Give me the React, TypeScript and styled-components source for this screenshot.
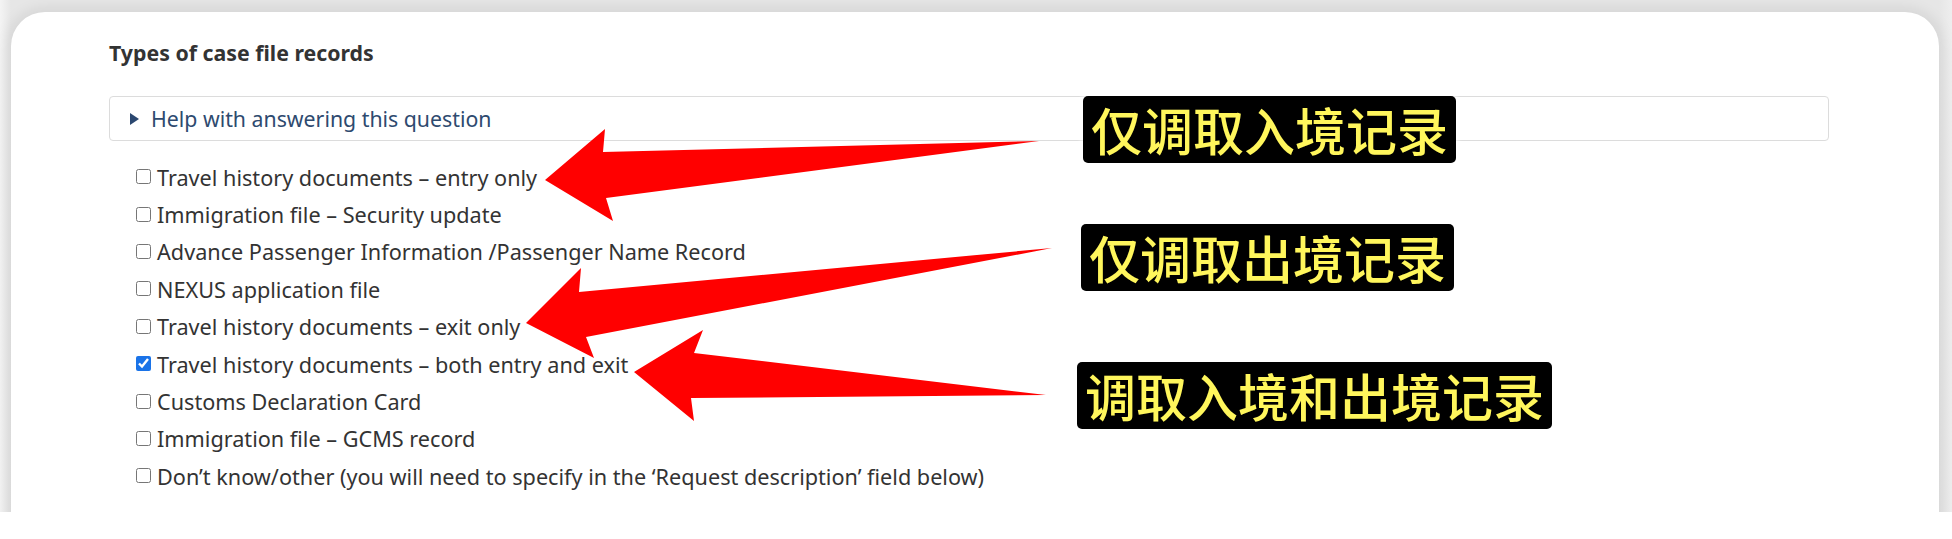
import styled, { createGlobalStyle } from 'styled-components';

const GlobalStyle = createGlobalStyle`
    html, body {
        margin: 0;
        padding: 0;
        background: #ffffff;
    }
    body {
        font-family: "Noto Sans", "Noto Sans CJK SC", sans-serif;
        color: #333333;
    }
`;

const options = [
    { label: 'Travel history documents – entry only', checked: false },
    { label: 'Immigration file – Security update', checked: false },
    { label: 'Advance Passenger Information /Passenger Name Record', checked: false },
    { label: 'NEXUS application file', checked: false },
    { label: 'Travel history documents – exit only', checked: false },
    { label: 'Travel history documents – both entry and exit', checked: true },
    { label: 'Customs Declaration Card', checked: false },
    { label: 'Immigration file – GCMS record', checked: false },
    { label: 'Don’t know/other (you will need to specify in the ‘Request description’ field below)', checked: false },
];

// callouts drawn on top of the screenshot
const notes = [
    { text: '仅调取入境记录', left: 1083, top: 96 },
    { text: '仅调取出境记录', left: 1081, top: 224 },
    { text: '调取入境和出境记录', left: 1077, top: 362 },
];

const arrows = [
    '545,180 605,129 603,152 1039,141 606,198 613,221',
    '526,323 581,268 579,292 1052,248 586,337 594,358',
    '634,372 703,330 694,353 1046,395 691,398 694,421',
];

export default function App(): JSX.Element {
    return (
        <>
            <GlobalStyle />
            <Page>
                <Card>
                    <Heading>Types of case file records</Heading>

                    <Help>
                        <Marker />
                        <HelpText>Help with answering this question</HelpText>
                    </Help>

                    <OptionList>
                        {options.map((o) => (
                            <OptionRow key={o.label}>
                                <Box type="checkbox" defaultChecked={o.checked} />
                                <OptionLabel>{o.label}</OptionLabel>
                            </OptionRow>
                        ))}
                    </OptionList>
                </Card>

                <Overlay width="1952" height="539" viewBox="0 0 1952 539">
                    {arrows.map((p) => (
                        <polygon key={p} points={p} fill="#ff0000" />
                    ))}
                </Overlay>

                {notes.map((n) => (
                    <Note key={n.text} $left={n.left} $top={n.top}>
                        {n.text}
                    </Note>
                ))}
            </Page>
        </>
    );
}

const Page = styled.div`
    position: relative;
    width: 1952px;
    height: 512px;
    overflow: hidden;
    box-sizing: border-box;
    padding: 12px 13px 0 11px;
    background: linear-gradient(to right, #f4f4f4 0px, #e6e6e6 11px, #e6e6e6 1939px, #eeeeee 1952px);
`;

const Card = styled.div`
    box-sizing: border-box;
    width: 1928px;
    height: 560px;
    padding: 26px 110px 0 98px;
    background: #ffffff;
    border-radius: 34px;
    box-shadow: 0 0 14px 4px rgba(0, 0, 0, 0.08);
`;

const Heading = styled.h2`
    margin: 0 0 28px 0;
    font-size: 21.3px;
    line-height: 30px;
    font-weight: 700;
    color: #333333;
`;

const Help = styled.div`
    box-sizing: border-box;
    display: flex;
    align-items: center;
    gap: 12px;
    width: 1720px;
    height: 45px;
    padding-left: 20px;
    border: 1px solid #dcdcdc;
    border-radius: 4px;
`;

const Marker = styled.span`
    width: 0;
    height: 0;
    border-left: 9px solid #2b4770;
    border-top: 6px solid transparent;
    border-bottom: 6px solid transparent;
`;

const HelpText = styled.span`
    font-size: 21.3px;
    line-height: 28px;
    color: #2e4a6f;
`;

const OptionList = styled.div`
    display: flex;
    flex-direction: column;
    margin-top: 18px;
    padding-left: 23px;
`;

const OptionRow = styled.label`
    display: flex;
    align-items: center;
    height: 37.4px;
`;

const Box = styled.input`
    width: 15px;
    height: 15px;
    margin: 0 6px 2px 4px;
    accent-color: #1a73e8;
`;

const OptionLabel = styled.span`
    font-size: 21.65px;
    line-height: 28px;
    color: #333333;
    white-space: nowrap;
`;

const Overlay = styled.svg`
    position: absolute;
    left: 0;
    top: 0;
    pointer-events: none;
`;

const Note = styled.div<{ $left: number; $top: number }>`
    position: absolute;
    left: ${(p) => p.$left}px;
    top: ${(p) => p.$top}px;
    height: 67px;
    padding: 0 8px;
    background: #000000;
    border-radius: 5px;
    font-family: "Noto Sans CJK SC", sans-serif;
    font-size: 51px;
    line-height: 67px;
    font-weight: 500;
    color: #fff65c;
    white-space: nowrap;
    box-shadow: 0 0 4px 2px rgba(255, 255, 255, 0.7);
`;
